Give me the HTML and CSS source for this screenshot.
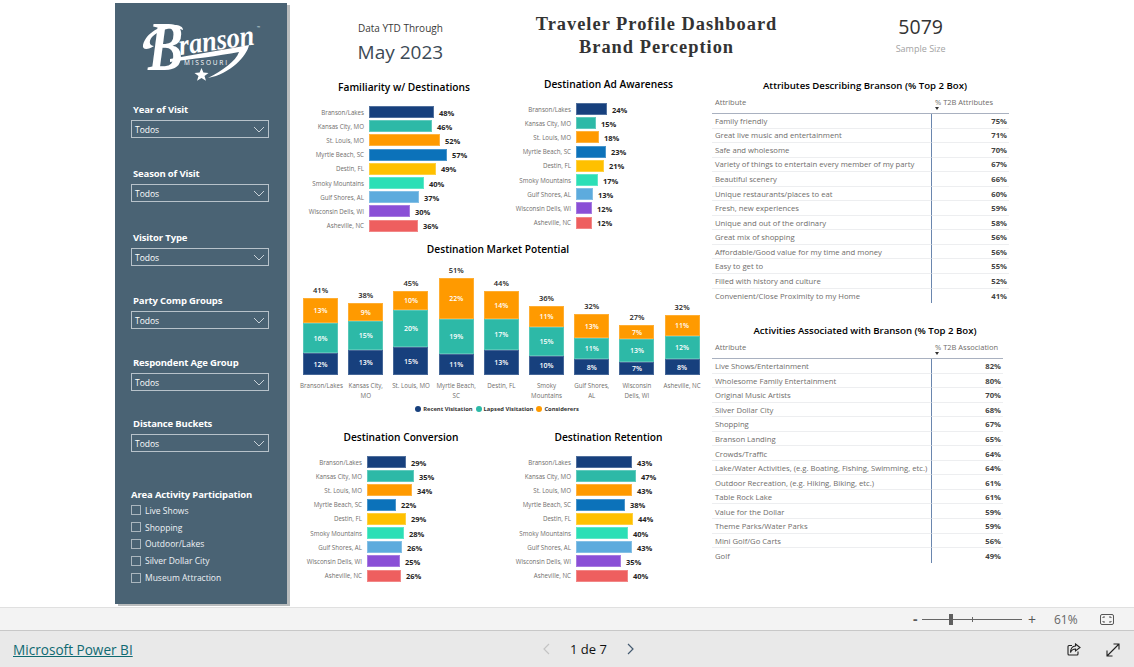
FILE: index.html
```html
<!DOCTYPE html>
<html lang="en">
<head>
<meta charset="utf-8">
<title>Traveler Profile Dashboard</title>
<link rel="stylesheet" href="styles.css">
</head>
<body>
<main class="canvas">
  <aside class="sidebar">
    <svg class="logo" width="135" height="70" viewBox="0 0 135 70" aria-label="Branson Missouri">
      <path class="logo-fill" d="M13 30C16 18 30 10 44 10C50 10 53 12 53 15C44 11 30 14 22 22C18 27 20 31 24 31C18 35 12 35 13 30Z"/>
      <text class="logo-b" transform="translate(18 55) scale(.85 1.12)">B</text>
      <text class="logo-word" transform="translate(50 40) rotate(-8)" textLength="76" lengthAdjust="spacingAndGlyphs">ranson</text>
      <text class="logo-tm" x="127" y="14">™</text>
      <path class="logo-fill" d="M40 44C65 39 95 35 119 30C117 41 100 59 78 63C92 56 106 46 109 37C88 41 62 44 40 47Z"/>
      <text class="logo-sub" x="54" y="50" textLength="43">MISSOURI</text>
      <polygon class="logo-fill" points="71.500,53 73.400,57.600 78.500,57.900 74.500,61 76,65.800 71.500,63 67,65.800 68.500,61 64.500,57.900 69.600,57.600"/>
    </svg>
    <div class="slicers">
      <section class="slicer"><h3>Year of Visit</h3><div class="dropdown"><span>Todos</span><svg width="12" height="7" viewBox="0 0 12 7"><path d="M1 1l5 5 5-5"/></svg></div></section>
      <section class="slicer"><h3>Season of Visit</h3><div class="dropdown"><span>Todos</span><svg width="12" height="7" viewBox="0 0 12 7"><path d="M1 1l5 5 5-5"/></svg></div></section>
      <section class="slicer"><h3>Visitor Type</h3><div class="dropdown"><span>Todos</span><svg width="12" height="7" viewBox="0 0 12 7"><path d="M1 1l5 5 5-5"/></svg></div></section>
      <section class="slicer"><h3>Party Comp Groups</h3><div class="dropdown"><span>Todos</span><svg width="12" height="7" viewBox="0 0 12 7"><path d="M1 1l5 5 5-5"/></svg></div></section>
      <section class="slicer"><h3>Respondent Age Group</h3><div class="dropdown"><span>Todos</span><svg width="12" height="7" viewBox="0 0 12 7"><path d="M1 1l5 5 5-5"/></svg></div></section>
      <section class="slicer"><h3>Distance Buckets</h3><div class="dropdown"><span>Todos</span><svg width="12" height="7" viewBox="0 0 12 7"><path d="M1 1l5 5 5-5"/></svg></div></section>
    </div>
    <section class="activities">
      <h3>Area Activity Participation</h3>
      <div class="check"><i></i>Live Shows</div>
      <div class="check"><i></i>Shopping</div>
      <div class="check"><i></i>Outdoor/Lakes</div>
      <div class="check"><i></i>Silver Dollar City</div>
      <div class="check"><i></i>Museum Attraction</div>
    </section>
  </aside>

  <div class="report">
    <header class="report-head">
      <div class="date-block"><p class="date-caption">Data YTD Through</p><p class="date-value">May 2023</p></div>
      <h1 class="report-title">Traveler Profile Dashboard<br>Brand Perception</h1>
      <div class="sample-block"><p class="sample-value">5079</p><p class="sample-caption">Sample Size</p></div>
    </header>

    <div class="report-body">
      <div class="charts">
        <div class="chart-pair pair-top">
          <section class="bar-chart familiarity">
            <h2>Familiarity w/ Destinations</h2>
            <div class="bar-row"><span class="bar-label">Branson/Lakes</span><span class="bar c1" style="width:65px"></span><span class="bar-value">48%</span></div>
            <div class="bar-row"><span class="bar-label">Kansas City, MO</span><span class="bar c2" style="width:63px"></span><span class="bar-value">46%</span></div>
            <div class="bar-row"><span class="bar-label">St. Louis, MO</span><span class="bar c3" style="width:71px"></span><span class="bar-value">52%</span></div>
            <div class="bar-row"><span class="bar-label">Myrtle Beach, SC</span><span class="bar c4" style="width:78px"></span><span class="bar-value">57%</span></div>
            <div class="bar-row"><span class="bar-label">Destin, FL</span><span class="bar c5" style="width:67px"></span><span class="bar-value">49%</span></div>
            <div class="bar-row"><span class="bar-label">Smoky Mountains</span><span class="bar c6" style="width:55px"></span><span class="bar-value">40%</span></div>
            <div class="bar-row"><span class="bar-label">Gulf Shores, AL</span><span class="bar c7" style="width:50px"></span><span class="bar-value">37%</span></div>
            <div class="bar-row"><span class="bar-label">Wisconsin Dells, WI</span><span class="bar c8" style="width:41px"></span><span class="bar-value">30%</span></div>
            <div class="bar-row"><span class="bar-label">Asheville, NC</span><span class="bar c9" style="width:49px"></span><span class="bar-value">36%</span></div>
          </section>
          <section class="bar-chart awareness">
            <h2>Destination Ad Awareness</h2>
            <div class="bar-row"><span class="bar-label">Branson/Lakes</span><span class="bar c1" style="width:31px"></span><span class="bar-value">24%</span></div>
            <div class="bar-row"><span class="bar-label">Kansas City, MO</span><span class="bar c2" style="width:20px"></span><span class="bar-value">15%</span></div>
            <div class="bar-row"><span class="bar-label">St. Louis, MO</span><span class="bar c3" style="width:23px"></span><span class="bar-value">18%</span></div>
            <div class="bar-row"><span class="bar-label">Myrtle Beach, SC</span><span class="bar c4" style="width:30px"></span><span class="bar-value">23%</span></div>
            <div class="bar-row"><span class="bar-label">Destin, FL</span><span class="bar c5" style="width:28px"></span><span class="bar-value">21%</span></div>
            <div class="bar-row"><span class="bar-label">Smoky Mountains</span><span class="bar c6" style="width:22px"></span><span class="bar-value">17%</span></div>
            <div class="bar-row"><span class="bar-label">Gulf Shores, AL</span><span class="bar c7" style="width:17px"></span><span class="bar-value">13%</span></div>
            <div class="bar-row"><span class="bar-label">Wisconsin Dells, WI</span><span class="bar c8" style="width:16px"></span><span class="bar-value">12%</span></div>
            <div class="bar-row"><span class="bar-label">Asheville, NC</span><span class="bar c9" style="width:16px"></span><span class="bar-value">12%</span></div>
          </section>
        </div>

        <section class="stack-chart">
          <h2>Destination Market Potential</h2>
          <div class="stack-plot">
            <div class="stack-col"><span class="stack-total">41%</span><span class="seg c3" style="height:25px">13%</span><span class="seg c2" style="height:30px">16%</span><span class="seg c1" style="height:22px">12%</span></div>
            <div class="stack-col"><span class="stack-total">38%</span><span class="seg c3" style="height:18px">9%</span><span class="seg c2" style="height:29px">15%</span><span class="seg c1" style="height:25px">13%</span></div>
            <div class="stack-col"><span class="stack-total">45%</span><span class="seg c3" style="height:19px">10%</span><span class="seg c2" style="height:37px">20%</span><span class="seg c1" style="height:28px">15%</span></div>
            <div class="stack-col"><span class="stack-total">51%</span><span class="seg c3" style="height:41px">22%</span><span class="seg c2" style="height:35px">19%</span><span class="seg c1" style="height:21px">11%</span></div>
            <div class="stack-col"><span class="stack-total">44%</span><span class="seg c3" style="height:28px">14%</span><span class="seg c2" style="height:31px">17%</span><span class="seg c1" style="height:25px">13%</span></div>
            <div class="stack-col"><span class="stack-total">36%</span><span class="seg c3" style="height:21px">11%</span><span class="seg c2" style="height:29px">15%</span><span class="seg c1" style="height:19px">10%</span></div>
            <div class="stack-col"><span class="stack-total">32%</span><span class="seg c3" style="height:24px">13%</span><span class="seg c2" style="height:21px">11%</span><span class="seg c1" style="height:16px">8%</span></div>
            <div class="stack-col"><span class="stack-total">27%</span><span class="seg c3" style="height:14px">7%</span><span class="seg c2" style="height:23px">13%</span><span class="seg c1" style="height:13px">7%</span></div>
            <div class="stack-col"><span class="stack-total">32%</span><span class="seg c3" style="height:21px">11%</span><span class="seg c2" style="height:23px">12%</span><span class="seg c1" style="height:16px">8%</span></div>
          </div>
          <div class="stack-axis">
            <span>Branson/Lakes</span><span>Kansas City, MO</span><span>St. Louis, MO</span><span>Myrtle Beach, SC</span><span>Destin, FL</span><span>Smoky Mountains</span><span>Gulf Shores, AL</span><span>Wisconsin Dells, WI</span><span>Asheville, NC</span>
          </div>
          <div class="legend">
            <span class="legend-item"><i class="c1"></i>Recent Visitation</span>
            <span class="legend-item"><i class="c2"></i>Lapsed Visitation</span>
            <span class="legend-item"><i class="c3"></i>Considerers</span>
          </div>
        </section>

        <div class="chart-pair pair-bottom">
          <section class="bar-chart conversion">
            <h2>Destination Conversion</h2>
            <div class="bar-row"><span class="bar-label">Branson/Lakes</span><span class="bar c1" style="width:39px"></span><span class="bar-value">29%</span></div>
            <div class="bar-row"><span class="bar-label">Kansas City, MO</span><span class="bar c2" style="width:47px"></span><span class="bar-value">35%</span></div>
            <div class="bar-row"><span class="bar-label">St. Louis, MO</span><span class="bar c3" style="width:45px"></span><span class="bar-value">34%</span></div>
            <div class="bar-row"><span class="bar-label">Myrtle Beach, SC</span><span class="bar c4" style="width:29px"></span><span class="bar-value">22%</span></div>
            <div class="bar-row"><span class="bar-label">Destin, FL</span><span class="bar c5" style="width:39px"></span><span class="bar-value">29%</span></div>
            <div class="bar-row"><span class="bar-label">Smoky Mountains</span><span class="bar c6" style="width:37px"></span><span class="bar-value">28%</span></div>
            <div class="bar-row"><span class="bar-label">Gulf Shores, AL</span><span class="bar c7" style="width:35px"></span><span class="bar-value">26%</span></div>
            <div class="bar-row"><span class="bar-label">Wisconsin Dells, WI</span><span class="bar c8" style="width:33px"></span><span class="bar-value">25%</span></div>
            <div class="bar-row"><span class="bar-label">Asheville, NC</span><span class="bar c9" style="width:34px"></span><span class="bar-value">26%</span></div>
          </section>
          <section class="bar-chart retention">
            <h2>Destination Retention</h2>
            <div class="bar-row"><span class="bar-label">Branson/Lakes</span><span class="bar c1" style="width:56px"></span><span class="bar-value">43%</span></div>
            <div class="bar-row"><span class="bar-label">Kansas City, MO</span><span class="bar c2" style="width:60px"></span><span class="bar-value">47%</span></div>
            <div class="bar-row"><span class="bar-label">St. Louis, MO</span><span class="bar c3" style="width:56px"></span><span class="bar-value">43%</span></div>
            <div class="bar-row"><span class="bar-label">Myrtle Beach, SC</span><span class="bar c4" style="width:49px"></span><span class="bar-value">38%</span></div>
            <div class="bar-row"><span class="bar-label">Destin, FL</span><span class="bar c5" style="width:57px"></span><span class="bar-value">44%</span></div>
            <div class="bar-row"><span class="bar-label">Smoky Mountains</span><span class="bar c6" style="width:52px"></span><span class="bar-value">40%</span></div>
            <div class="bar-row"><span class="bar-label">Gulf Shores, AL</span><span class="bar c7" style="width:56px"></span><span class="bar-value">43%</span></div>
            <div class="bar-row"><span class="bar-label">Wisconsin Dells, WI</span><span class="bar c8" style="width:45px"></span><span class="bar-value">35%</span></div>
            <div class="bar-row"><span class="bar-label">Asheville, NC</span><span class="bar c9" style="width:52px"></span><span class="bar-value">40%</span></div>
          </section>
        </div>
      </div>

      <div class="tables">
        <section class="matrix matrix-attr">
          <h2>Attributes Describing Branson (% Top 2 Box)</h2>
          <table>
            <thead><tr><th>Attribute</th><th class="num-head">% T2B Attributes<i class="sort"></i></th></tr></thead>
            <tbody>
              <tr><td>Family friendly</td><td>75%</td></tr>
              <tr><td>Great live music and entertainment</td><td>71%</td></tr>
              <tr><td>Safe and wholesome</td><td>70%</td></tr>
              <tr><td>Variety of things to entertain every member of my party</td><td>67%</td></tr>
              <tr><td>Beautiful scenery</td><td>66%</td></tr>
              <tr><td>Unique restaurants/places to eat</td><td>60%</td></tr>
              <tr><td>Fresh, new experiences</td><td>59%</td></tr>
              <tr><td>Unique and out of the ordinary</td><td>58%</td></tr>
              <tr><td>Great mix of shopping</td><td>56%</td></tr>
              <tr><td>Affordable/Good value for my time and money</td><td>56%</td></tr>
              <tr><td>Easy to get to</td><td>55%</td></tr>
              <tr><td>Filled with history and culture</td><td>52%</td></tr>
              <tr><td>Convenient/Close Proximity to my Home</td><td>41%</td></tr>
            </tbody>
          </table>
        </section>
        <section class="matrix matrix-act">
          <h2>Activities Associated with Branson (% Top 2 Box)</h2>
          <table>
            <thead><tr><th>Attribute</th><th class="num-head">% T2B Association<i class="sort"></i></th></tr></thead>
            <tbody>
              <tr><td>Live Shows/Entertainment</td><td>82%</td></tr>
              <tr><td>Wholesome Family Entertainment</td><td>80%</td></tr>
              <tr><td>Original Music Artists</td><td>70%</td></tr>
              <tr><td>Silver Dollar City</td><td>68%</td></tr>
              <tr><td>Shopping</td><td>67%</td></tr>
              <tr><td>Branson Landing</td><td>65%</td></tr>
              <tr><td>Crowds/Traffic</td><td>64%</td></tr>
              <tr><td>Lake/Water Activities, (e.g. Boating, Fishing, Swimming, etc.)</td><td>64%</td></tr>
              <tr><td>Outdoor Recreation, (e.g. Hiking, Biking, etc.)</td><td>61%</td></tr>
              <tr><td>Table Rock Lake</td><td>61%</td></tr>
              <tr><td>Value for the Dollar</td><td>59%</td></tr>
              <tr><td>Theme Parks/Water Parks</td><td>59%</td></tr>
              <tr><td>Mini Golf/Go Carts</td><td>56%</td></tr>
              <tr><td>Golf</td><td>49%</td></tr>
            </tbody>
          </table>
        </section>
      </div>
    </div>
  </div>
</main>

<div class="zoom-bar">
  <span class="zoom-minus">-</span>
  <div class="zoom-slider"><i class="zoom-thumb"></i><i class="zoom-tick"></i></div>
  <span class="zoom-plus">+</span>
  <span class="zoom-pct">61%</span>
  <svg class="zoom-fit" width="14" height="11" viewBox="0 0 14 11"><rect x=".5" y=".5" width="13" height="10" rx="1.5"/><path d="M3 4V3h2M11 4V3H9M3 7v1h2M11 7v1H9"/></svg>
</div>

<footer class="foot">
  <a class="foot-link" href="#">Microsoft Power BI</a>
  <nav class="pager">
    <svg class="pager-prev" width="8" height="12" viewBox="0 0 8 12"><path d="M7 1L2 6l5 5"/></svg>
    <span class="pager-text">1 de 7</span>
    <svg class="pager-next" width="8" height="12" viewBox="0 0 8 12"><path d="M1 1l5 5-5 5"/></svg>
  </nav>
  <div class="foot-icons">
    <svg width="14" height="13" viewBox="0 0 14 13"><path d="M5 2.5H2a1 1 0 0 0-1 1V11a1 1 0 0 0 1 1h8a1 1 0 0 0 1-1V8.500"/><path d="M8.500 1l4.500 3.500L8.500 8V6C6 6 4.500 7 3.500 9.500 3.500 6 5 3 8.500 3Z"/></svg>
    <svg width="14" height="14" viewBox="0 0 14 14"><path d="M1 13L13 1M7.500 1H13V6.500M1 7.500V13H6.500"/></svg>
  </div>
</footer>
</body>
</html>
```
FILE: styles.css
```css
* { box-sizing: border-box; }
html, body { margin: 0; padding: 0; }
body {
  width: 1134px;
  height: 667px;
  overflow: hidden;
  background: #fff;
  font-family: "Open Sans", "Noto Sans", sans-serif;
  color: #252423;
}
h1, h2, h3, p { margin: 0; }

.c1 { background: #17407d; }
.c2 { background: #2db9a7; }
.c3 { background: #ff9a00; }
.c4 { background: #0c72ba; }
.c5 { background: #ffc000; }
.c6 { background: #2bdfb6; }
.c7 { background: #5dabdd; }
.c8 { background: #8a4fd6; }
.c9 { background: #ee5f5f; }

.canvas {
  display: flex;
  height: 607px;
  padding: 3px 0 0 115px;
}

/* Sidebar */
.sidebar {
  width: 172px;
  height: 601px;
  flex: none;
  background: #4a6374;
  box-shadow: 3px 2px 0 #b9bcbd;
  color: #fff;
  padding: 12px 0 0 16px;
}
.logo { display: block; margin-left: -1px; }
.logo-fill { fill: #fff; }
.logo-b { font: italic 700 62px "Liberation Serif", serif; fill: #fff; }
.logo-word { font: italic 700 29px "Liberation Serif", serif; fill: #fff; }
.logo-tm { font: 400 4px "Open Sans", sans-serif; fill: #dfe5e9; }
.logo-sub { font: 400 6.5px "Open Sans", sans-serif; fill: #fff; }
.slicers {
  display: grid;
  grid-template-rows: 64px 64px 63px 62px 61px 72px;
  margin-top: 4px;
}
.slicer h3, .activities h3 {
  font-size: 9.5px;
  line-height: 13px;
  font-weight: 700;
  letter-spacing: -.15px;
}
.slicer h3 { margin: 14px 0 4px 2px; }
.dropdown {
  width: 138px;
  height: 18px;
  border: 1px solid #b7c2ca;
  display: flex;
  align-items: center;
  justify-content: space-between;
  padding: 0 3px 0 3px;
  font-size: 8.5px;
}
.dropdown svg { fill: none; stroke: #c9d2d8; stroke-width: 1; }
.activities h3 { margin-bottom: 1px; }
.activities { margin-top: 13px; }
.check {
  display: flex;
  align-items: center;
  gap: 4px;
  height: 16.8px;
  font-size: 8.5px;
  color: #eef2f4;
}
.check i {
  width: 10px;
  height: 10px;
  border: 1px solid #aab6be;
  flex: none;
}

/* Report */
.report { margin-left: 8px; width: 731px; }
.report-head { display: flex; height: 72px; text-align: center; }
.date-block { width: 212px; padding: 18px 0 0 2px; }
.date-caption { font-size: 10px; line-height: 15px; color: #3b3a39; }
.date-value { font-size: 19px; line-height: 26px; color: #3c4a55; margin-top: 3px; }
.report-title {
  width: 298px;
  padding: 10px 0 0 12px;
  font: 700 18.4px/23px "Liberation Serif", serif;
  letter-spacing: 1px;
  color: #333;
}
.sample-block { width: 232px; padding: 11px 0 0 18px; }
.sample-value { font-size: 19.5px; line-height: 26px; color: #333; }
.sample-caption { font-size: 9px; line-height: 14px; color: #a3a3a3; margin-top: 2px; }

.report-body { display: flex; }
.charts { width: 417px; flex: none; }
.chart-pair { display: grid; grid-template-columns: 210px 207px; }
.pair-top { height: 166px; }
.pair-bottom { height: 170px; }

h2 {
  font-size: 10.2px;
  line-height: 16px;
  font-weight: 600;
  color: #000;
  text-align: center;
  white-space: nowrap;
}
.bar-chart h2 { margin-bottom: 10px; }
.familiarity { padding-top: 4px; }
.familiarity h2 { padding-left: 8px; }
.awareness { padding-top: 1px; }
.conversion { padding-top: 0; }
.conversion h2 { padding-left: 2px; }
.bar-row {
  display: flex;
  align-items: center;
  height: 14.2px;
}
.bar-label {
  width: 69px;
  flex: none;
  font-size: 6.2px;
  text-align: right;
  white-space: nowrap;
  color: #6f6d6b;
  margin-right: 5px;
}
.awareness .bar-label, .retention .bar-label { width: 66px; }
.conversion .bar-label { width: 67px; }
.bar {
  height: 12px;
  box-shadow: inset 0 0 0 1px rgba(255,255,255,.25);
}
.bar-value {
  font-size: 7.5px;
  font-weight: 700;
  margin-left: 5px;
  padding-top: 1px;
  color: #252423;
}

/* Stacked chart */
.stack-chart { margin-left: 3px; }
.stack-chart h2 { width: 400px; }
.stack-plot {
  display: grid;
  grid-template-columns: repeat(9, 45.2px);
  height: 118px;
}
.stack-col {
  display: flex;
  flex-direction: column;
  justify-content: flex-end;
  align-items: center;
}
.stack-total { font-size: 7.5px; font-weight: 600; line-height: 11px; margin-bottom: 2px; }
.seg {
  width: 35px;
  display: flex;
  align-items: center;
  justify-content: center;
  color: #fff;
  font-size: 7px;
  font-weight: 600;
  box-shadow: inset 0 0 0 1px rgba(255,255,255,.2);
}
.stack-axis {
  display: grid;
  grid-template-columns: repeat(9, 45.2px);
  padding-top: 6px;
  height: 29px;
}
.stack-axis span {
  font-size: 6.2px;
  line-height: 10px;
  text-align: center;
  color: #6f6d6b;
  padding: 0 2px;
}
.legend {
  display: flex;
  justify-content: center;
  width: 398px;
  gap: 3px;
  height: 10px;
  align-items: center;
  margin-bottom: 15px;
  font-size: 5.8px;
  font-weight: 700;
  color: #333;
}
.legend-item { display: flex; align-items: center; gap: 2px; }
.legend-item i { width: 6px; height: 6px; border-radius: 50%; }

/* Tables */
.tables { padding-top: 4px; }
.matrix table {
  border-collapse: separate;
  border-spacing: 0;
  table-layout: fixed;
}
.matrix-attr { width: 297px; height: 245px; }
.matrix-act { width: 291px; }
.matrix-attr table { width: 297px; }
.matrix-act table { width: 291px; }
.matrix h2 { font-size: 9.6px; line-height: 13px; margin-bottom: 2px; width: 306px; }
.matrix th {
  height: 20px;
  font-size: 7.5px;
  font-weight: 400;
  color: #6f6d6b;
  text-align: left;
  padding: 0 0 4px 3px;
  border-bottom: 1px solid #a9b1c0;
  position: relative;
  white-space: nowrap;
}
.matrix th:first-child { width: 219px; }
.matrix .num-head { padding-left: 4px; }
.sort {
  position: absolute;
  left: 4px;
  bottom: 3px;
  border: 2.5px solid transparent;
  border-top: 3px solid #333;
  border-bottom: 0;
}
.matrix td {
  height: 14.55px;
  padding: 1px 0 0 3px;
  font-size: 7.7px;
  color: #6f6d6b;
  border-bottom: 1px solid #edeef0;
  white-space: nowrap;
  line-height: 11px;
}
.matrix-act td { padding-top: 2px; }
.matrix td:last-child {
  text-align: right;
  padding-right: 2px;
  font-weight: 700;
  color: #444;
  border-left: 1px solid #6a86ae;
}
.matrix tr:last-child td { border-bottom: 0; }

/* Zoom bar */
.zoom-bar {
  height: 24px;
  background: #f3f3f3;
  border-top: 1px solid #e0e0e0;
  border-bottom: 1px solid #c8c8c8;
  display: flex;
  align-items: center;
  padding-left: 913px;
  color: #5a5a5a;
}
.zoom-minus { width: 9px; font-size: 14px; font-weight: 700; line-height: 14px; }
.zoom-slider { width: 100px; height: 1px; background: #666; position: relative; }
.zoom-thumb { position: absolute; left: 27px; top: -5px; width: 4px; height: 11px; background: #5f5f5f; }
.zoom-tick { position: absolute; left: 50px; top: -2px; width: 1px; height: 5px; background: #666; }
.zoom-plus { margin-left: 6px; width: 10px; font-size: 14px; color: #555; }
.zoom-pct { margin-left: 16px; width: 36px; font-size: 12px; color: #666; }
.zoom-fit { margin-left: 10px; fill: none; stroke: #555; stroke-width: 1; }

/* Footer */
.foot {
  height: 36px;
  background: #e9e9e9;
  display: flex;
  align-items: center;
  padding: 1px 0 0 13px;
}
.foot-link { font-size: 13.6px; color: #0f6a72; width: 529px; }
.pager { display: flex; align-items: center; width: 93px; justify-content: space-between; margin-top: -1px; }
.pager svg { fill: none; stroke-width: 1.2; }
.pager-prev { stroke: #c4c4c4; }
.pager-next { stroke: #445a70; }
.pager-text { font-size: 13px; color: #111; }
.foot-icons { display: flex; gap: 25px; margin-left: 432px; }
.foot-icons svg { fill: none; stroke: #222; stroke-width: 1.1; }
```
